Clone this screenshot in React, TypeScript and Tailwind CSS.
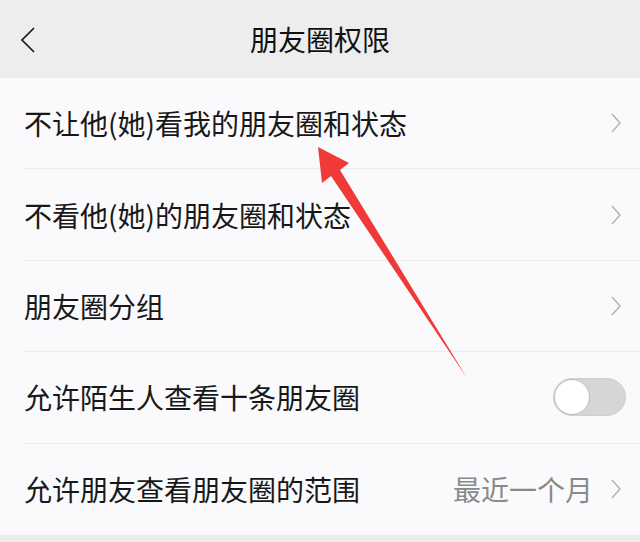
import type { ReactNode } from "react"

const font = { fontFamily: '"Noto Sans CJK SC", "Noto Sans", sans-serif' }

function Chevron() {
  return (
    <svg width="12" height="22" viewBox="0 0 12 22" className="shrink-0">
      <polyline points="2,2 10,11 2,20" fill="none" stroke="#b3b3b3" strokeWidth="1.5" strokeLinejoin="miter" />
    </svg>
  )
}

function Row({ label, right, last }: { label: string; right?: ReactNode; last?: boolean }) {
  return (
    <div className="h-[91.4px] pl-[24px] flex">
      <div className={`flex-1 flex items-center pr-[18px] ${last ? "" : "border-b border-[#ececee]"}`}>
        <span className="flex-1 text-[28px] text-[#181818]">{label}</span>
        {right ?? <Chevron />}
      </div>
    </div>
  )
}

function Toggle() {
  return (
    <div className="w-[73px] h-[38px] rounded-full bg-[#d6d6d8] border border-[#cfcfd1] flex items-center mr-[-4px]">
      <div className="w-[36px] h-[36px] rounded-full bg-white border border-[#bdbdbd]" />
    </div>
  )
}

export default function App() {
  return (
    <div className="relative w-full h-[542px] bg-[#ededed] overflow-hidden" style={font}>
      <div className="h-[78px] flex items-center relative">
        <svg width="18" height="28" viewBox="0 0 18 28" className="absolute left-[19px] top-[26px]">
          <polyline points="15,2 3,14 15,26" fill="none" stroke="#1a1a1a" strokeWidth="1.7" />
        </svg>
        <div className="flex-1 text-center text-[28px] text-[#111]">朋友圈权限</div>
      </div>
      <div className="bg-[#fafafc]">
        <Row label="不让他(她)看我的朋友圈和状态" />
        <Row label="不看他(她)的朋友圈和状态" />
        <Row label="朋友圈分组" />
        <Row label="允许陌生人查看十条朋友圈" right={<Toggle />} />
        <Row
          label="允许朋友查看朋友圈的范围"
          last
          right={
            <div className="flex items-center gap-[17px]">
              <span className="text-[28px] text-[#8a8a8a]">最近一个月</span>
              <Chevron />
            </div>
          }
        />
      </div>
      <svg width="640" height="542" className="absolute left-0 top-0 pointer-events-none">
        <polygon points="318,147 349,163 340,170 467,378 331,176 322,183" fill="#f03a3a" />
      </svg>
    </div>
  )
}
